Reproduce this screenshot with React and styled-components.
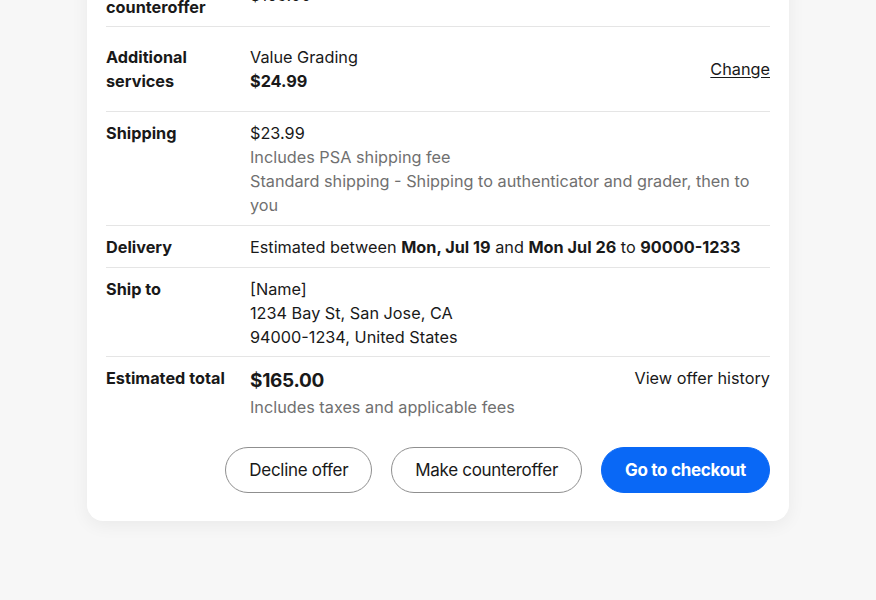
import React from "react"
import styled, { createGlobalStyle } from "styled-components"

const GlobalStyle = createGlobalStyle`
  html, body {
    margin: 0;
    padding: 0;
    background: #f7f7f7;
    font-family: Inter, "Liberation Sans", sans-serif;
    color: #191919;
    -webkit-font-smoothing: antialiased;
  }
`

const Viewport = styled.div`
  height: 600px;
  overflow: hidden;
  display: flex;
  flex-direction: column;
  justify-content: flex-end;
  align-items: center;
  padding-bottom: 79px;
  box-sizing: border-box;
`

const Card = styled.div`
  width: 702px;
  flex-shrink: 0;
  box-sizing: border-box;
  background: #fff;
  border-radius: 16px;
  box-shadow: 0 4px 18px rgba(0, 0, 0, 0.06);
  padding: 20px 19px 28px;
  font-size: 16.25px;
  line-height: 24px;
`

const Row = styled.div`
  display: grid;
  grid-template-columns: 144px 1fr auto;
  align-items: ${p => (p.$center ? "center" : "start")};
  padding: ${p => p.$pad || "9px 0 8px"};
  border-bottom: ${p => (p.$last ? "none" : "1px solid #e5e5e5")};
`

const Label = styled.div`
  font-weight: 700;
  padding-right: 12px;
`

const Value = styled.div`
  display: flex;
  flex-direction: column;
`

const Strong = styled.span`
  font-weight: 700;
`

const Muted = styled.span`
  color: #707070;
`

const BigPrice = styled.span`
  font-size: 19px;
  line-height: 29px;
  font-weight: 700;
  letter-spacing: -0.3px;
`

const LinkButton = styled.a`
  color: #191919;
  text-decoration: underline;
  text-underline-offset: 2px;
  cursor: pointer;
`

const PlainLink = styled.a`
  color: #191919;
  text-decoration: none;
  cursor: pointer;
`

const Actions = styled.div`
  display: flex;
  justify-content: flex-end;
  gap: 19px;
  margin-top: 18px;
`

const Button = styled.button`
  height: 46px;
  padding: 0 23px;
  border-radius: 23px;
  font-family: inherit;
  font-size: 17px;
  letter-spacing: -0.3px;
  cursor: pointer;
  border: 1px solid ${p => (p.$primary ? "#0968f6" : "#8f8f8f")};
  background: ${p => (p.$primary ? "#0968f6" : "#fff")};
  color: ${p => (p.$primary ? "#fff" : "#191919")};
  font-weight: ${p => (p.$primary ? 700 : 400)};
`

export default function App() {
  return (
    <>
      <GlobalStyle />
      <Viewport>
        <Card>
          <Row $center $pad="8px 0 7px">
            <Label>Seller's counteroffer</Label>
            <Value>$165.00</Value>
          </Row>
          <Row $center $pad="18px 0">
            <Label>Additional services</Label>
            <Value>
              <span>Value Grading</span>
              <Strong>$24.99</Strong>
            </Value>
            <LinkButton>Change</LinkButton>
          </Row>
          <Row>
            <Label>Shipping</Label>
            <Value>
              <span>$23.99</span>
              <Muted>Includes PSA shipping fee</Muted>
              <Muted>Standard shipping - Shipping to authenticator and grader, then to you</Muted>
            </Value>
          </Row>
          <Row>
            <Label>Delivery</Label>
            <Value>
              <span>
                Estimated between <Strong>Mon, Jul 19</Strong> and <Strong>Mon Jul 26</Strong> to{" "}
                <Strong>90000-1233</Strong>
              </span>
            </Value>
          </Row>
          <Row $pad="9px 0 7px">
            <Label>Ship to</Label>
            <Value>
              <span>[Name]</span>
              <span>1234 Bay St, San Jose, CA</span>
              <span>94000-1234, United States</span>
            </Value>
          </Row>
          <Row $last $pad="9px 0 10px">
            <Label>Estimated total</Label>
            <Value>
              <BigPrice>$165.00</BigPrice>
              <Muted>Includes taxes and applicable fees</Muted>
            </Value>
            <PlainLink>View offer history</PlainLink>
          </Row>
          <Actions>
            <Button>Decline offer</Button>
            <Button>Make counteroffer</Button>
            <Button $primary>Go to checkout</Button>
          </Actions>
        </Card>
      </Viewport>
    </>
  )
}
